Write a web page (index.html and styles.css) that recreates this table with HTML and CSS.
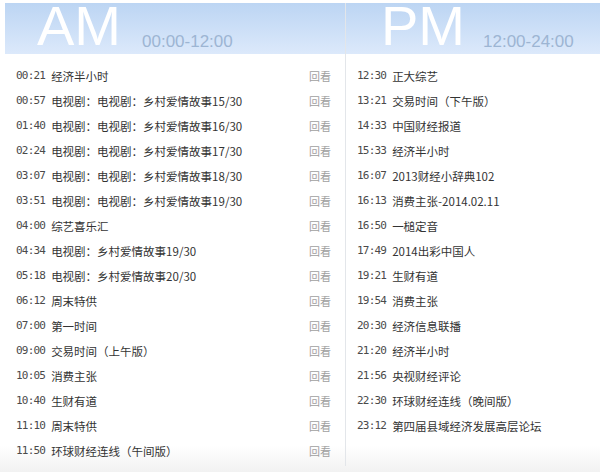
FILE: index.html
```html
<!DOCTYPE html>
<html lang="zh">
<head>
<meta charset="utf-8">
<link rel="stylesheet" href="styles.css">
</head>
<body>
<div class="wrap">
  <div class="col left">
    <div class="head"><span class="big">AM</span><span class="range">00:00-12:00</span></div>
    <ul class="list">
      <li><span class="t">00:21</span><span class="n">经济半小时</span><span class="r">回看</span></li>
      <li><span class="t">00:57</span><span class="n">电视剧：电视剧：乡村爱情故事15/30</span><span class="r">回看</span></li>
      <li><span class="t">01:40</span><span class="n">电视剧：电视剧：乡村爱情故事16/30</span><span class="r">回看</span></li>
      <li><span class="t">02:24</span><span class="n">电视剧：电视剧：乡村爱情故事17/30</span><span class="r">回看</span></li>
      <li><span class="t">03:07</span><span class="n">电视剧：电视剧：乡村爱情故事18/30</span><span class="r">回看</span></li>
      <li><span class="t">03:51</span><span class="n">电视剧：电视剧：乡村爱情故事19/30</span><span class="r">回看</span></li>
      <li><span class="t">04:00</span><span class="n">综艺喜乐汇</span><span class="r">回看</span></li>
      <li><span class="t">04:34</span><span class="n">电视剧：乡村爱情故事19/30</span><span class="r">回看</span></li>
      <li><span class="t">05:18</span><span class="n">电视剧：乡村爱情故事20/30</span><span class="r">回看</span></li>
      <li><span class="t">06:12</span><span class="n">周末特供</span><span class="r">回看</span></li>
      <li><span class="t">07:00</span><span class="n">第一时间</span><span class="r">回看</span></li>
      <li><span class="t">09:00</span><span class="n">交易时间（上午版）</span><span class="r">回看</span></li>
      <li><span class="t">10:05</span><span class="n">消费主张</span><span class="r">回看</span></li>
      <li><span class="t">10:40</span><span class="n">生财有道</span><span class="r">回看</span></li>
      <li><span class="t">11:10</span><span class="n">周末特供</span><span class="r">回看</span></li>
      <li><span class="t">11:50</span><span class="n">环球财经连线（午间版）</span><span class="r">回看</span></li>
    </ul>
  </div>
  <div class="col right">
    <div class="head"><span class="big">PM</span><span class="range">12:00-24:00</span></div>
    <ul class="list">
      <li><span class="t">12:30</span><span class="n">正大综艺</span></li>
      <li><span class="t">13:21</span><span class="n">交易时间（下午版）</span></li>
      <li><span class="t">14:33</span><span class="n">中国财经报道</span></li>
      <li><span class="t">15:33</span><span class="n">经济半小时</span></li>
      <li><span class="t">16:07</span><span class="n">2013财经小辞典102</span></li>
      <li><span class="t">16:13</span><span class="n">消费主张-2014.02.11</span></li>
      <li><span class="t">16:50</span><span class="n">一槌定音</span></li>
      <li><span class="t">17:49</span><span class="n">2014出彩中国人</span></li>
      <li><span class="t">19:21</span><span class="n">生财有道</span></li>
      <li><span class="t">19:54</span><span class="n">消费主张</span></li>
      <li><span class="t">20:30</span><span class="n">经济信息联播</span></li>
      <li><span class="t">21:20</span><span class="n">经济半小时</span></li>
      <li><span class="t">21:56</span><span class="n">央视财经评论</span></li>
      <li><span class="t">22:30</span><span class="n">环球财经连线（晚间版）</span></li>
      <li><span class="t">23:12</span><span class="n">第四届县域经济发展高层论坛</span></li>
    </ul>
  </div>
</div>
</body>
</html>
```
FILE: styles.css
```css
* { box-sizing: border-box; }
html, body { margin: 0; padding: 0; }
body {
  width: 600px;
  height: 472px;
  overflow: hidden;
  background: linear-gradient(#ffffff 0, #ffffff 445px, #f2f2f2 472px);
  font-family: "Noto Sans CJK SC", "Liberation Sans", sans-serif;
}
.wrap {
  display: flex;
  padding: 3px 0 0 5px;
  height: 466px;
}
.col { display: flex; flex-direction: column; }
.left { width: 341px; border-right: 1px solid #e3e6ea; }
.right { flex: 1; }
.head {
  height: 51px;
  background: linear-gradient(#bcd5f3, #dce9fb);
  display: flex;
  align-items: flex-end;
  white-space: nowrap;
}
.big {
  font-family: "Liberation Sans", Arial, sans-serif;
  font-size: 56px;
  line-height: 44px;
  color: #ffffff;
  margin-bottom: 6px;
}
.range {
  font-family: "Liberation Sans", Arial, sans-serif;
  font-size: 17px;
  color: #9db5d3;
  margin-bottom: 2px;
}
.left .big { margin-left: 32px; margin-right: 21px; }
.right .big { margin-left: 35px; margin-right: 18px; }
.list {
  list-style: none;
  margin: 0;
  padding: 9px 0 0 0;
}
.list li {
  display: flex;
  align-items: center;
  height: 25px;
  font-size: 11.5px;
  color: #333;
}
.left .list li { padding: 0 14px 0 11px; }
.right .list li { padding: 0 0 0 11px; }
.t {
  font-family: "DejaVu Sans Mono", "Liberation Mono", monospace;
  font-size: 11px;
  letter-spacing: -0.8px;
  color: #4a4a4a;
  margin-right: 6px;
}
.n { flex: 1; white-space: nowrap; }
.r { color: #a0a0a0; font-size: 11px; }
```
